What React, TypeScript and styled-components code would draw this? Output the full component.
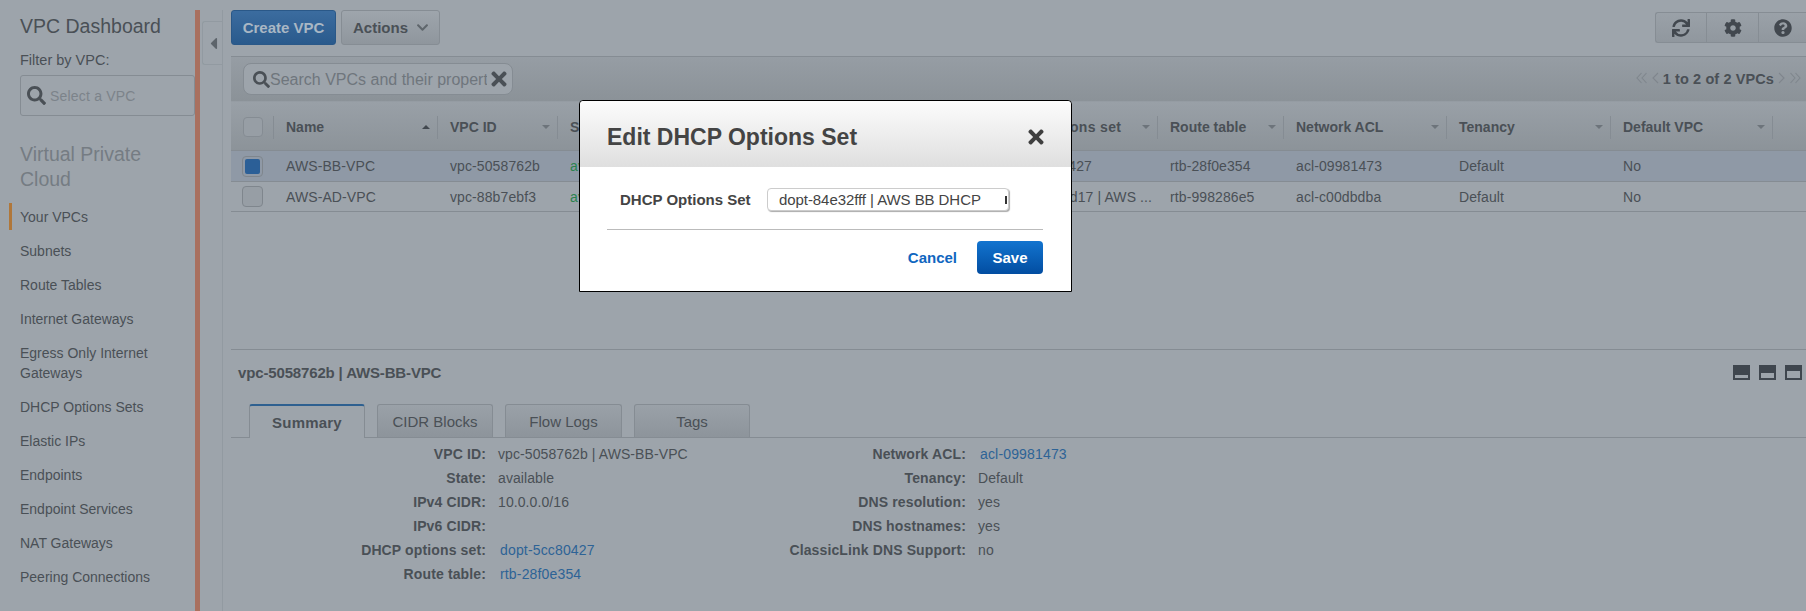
import React from "react";
import styled, { createGlobalStyle } from "styled-components";
import { FaCaretLeft, FaChevronDown, FaCog, FaQuestionCircle, FaSearch, FaSync, FaTimes } from "react-icons/fa";

const COLUMNS = "43px 164px 120px 142px 150px 136px 172px 126px 163px 164px 162px 1fr";

const GlobalStyle = createGlobalStyle`
  html, body {
    margin: 0;
    padding: 0;
    background: #9da4ab;
  }
  body {
    font-family: "Liberation Sans", Arial, sans-serif;
    font-size: 14px;
    color: #4a5056;
  }
  * {
    box-sizing: border-box;
  }
`;

const Page = styled.div`
  position: relative;
  display: flex;
  width: 1806px;
  height: 611px;
  overflow: hidden;
  background: #9da4ab;
`;

const Sidebar = styled.aside`
  width: 195px;
  flex: none;
  padding-top: 14px;
`;

const SidebarTitle = styled.div`
  margin-left: 20px;
  font-size: 19.5px;
  line-height: 25px;
`;

const FilterLabel = styled.div`
  margin: 11px 0 0 20px;
  font-size: 14.5px;
  line-height: 20px;
`;

const FilterBox = styled.div`
  display: flex;
  align-items: center;
  gap: 4px;
  width: 175px;
  height: 41px;
  margin: 5px 0 0 20px;
  padding-left: 6px;
  border: 1px solid #858c93;
  border-radius: 3px;
  color: #7c838a;
  letter-spacing: 0.2px;
  svg {
    color: #4a5056;
    font-size: 19px;
  }
`;

const SectionTitle = styled.div`
  margin: 26px 0 0 20px;
  width: 150px;
  font-size: 19.5px;
  line-height: 25px;
  color: #757c83;
`;

const NavList = styled.nav`
  margin: 11px 0 0 9px;
`;

const NavItem = styled.div<{ $active?: boolean }>`
  margin-bottom: 7px;
  padding: 3.5px 0 3.5px 8px;
  border-left: 3px solid ${(p) => (p.$active ? "#b0773a" : "transparent")};
  line-height: 20px;
`;

const TallNavItem = styled(NavItem)`
  width: 175px;
`;

const ResizeBar = styled.div`
  width: 5px;
  flex: none;
  margin-top: 10px;
  background: #a9705f;
`;

const Gutter = styled.div`
  width: 23px;
  flex: none;
  margin: 10px 8px 0 0;
  padding-top: 11px;
  border-right: 1px solid #929aa1;
`;

const CollapseHandle = styled.div`
  display: flex;
  align-items: center;
  width: 20px;
  height: 44px;
  margin-left: 2px;
  padding-left: 2px;
  border: 1px solid #929aa1;
  border-right: none;
  border-radius: 3px 0 0 3px;
  color: #5d646b;
  font-size: 19px;
`;

const Main = styled.main`
  flex: 1;
  min-width: 0;
  display: flex;
  flex-direction: column;
`;

const Toolbar = styled.div`
  display: flex;
  justify-content: space-between;
  height: 57px;
  padding-top: 10px;
  border-bottom: 1px solid #858c93;
`;

const ToolbarGroup = styled.div`
  display: flex;
  gap: 5px;
`;

const PrimaryButton = styled.div`
  display: flex;
  align-items: center;
  justify-content: center;
  width: 105px;
  height: 35px;
  border: 1px solid #2a5888;
  border-radius: 3px;
  background: linear-gradient(#3b6c9f, #2a5a8c);
  color: #a9b7c4;
  font-weight: bold;
  font-size: 15px;
`;

const ActionsButton = styled.div`
  display: flex;
  align-items: center;
  gap: 8px;
  width: 99px;
  height: 35px;
  padding-left: 11px;
  border: 1px solid #868d94;
  border-radius: 3px;
  background: linear-gradient(#9ea5ac, #8f969d);
  font-weight: bold;
  font-size: 15px;
  svg {
    font-size: 13px;
    color: #5f666c;
  }
`;

const IconGroup = styled.div`
  display: flex;
  height: 31px;
  margin-top: 2px;
  border: 1px solid #868d94;
  border-right: none;
  border-radius: 3px 0 0 3px;
  background: linear-gradient(#9aa1a8, #90979e);
`;

const IconButton = styled.div<{ $width: number }>`
  display: flex;
  align-items: center;
  justify-content: center;
  width: ${(p) => p.$width}px;
  border-right: 1px solid #868d94;
  font-size: 18px;
  color: #42484f;
  &:last-child {
    border-right: none;
  }
`;

const FilterStrip = styled.div`
  display: flex;
  align-items: center;
  justify-content: space-between;
  height: 45px;
  padding: 0 5px 0 12px;
  border-bottom: 1px solid #959ca3;
  background: linear-gradient(#969da4, #8b9298);
`;

const SearchBox = styled.div`
  display: flex;
  align-items: center;
  width: 270px;
  height: 32px;
  padding: 0 2px 0 9px;
  border: 1px solid #858c93;
  border-radius: 8px;
  background: #9da4ab;
  svg {
    flex: none;
    color: #4a5056;
  }
`;

const SearchInput = styled.input`
  flex: 1;
  min-width: 0;
  height: 100%;
  margin-right: 1px;
  padding: 1px 0 0;
  border: none;
  outline: none;
  background: transparent;
  font-family: inherit;
  font-size: 16px;
  &::placeholder {
    color: #6f767d;
    opacity: 1;
  }
`;

const Pager = styled.div`
  display: flex;
  align-items: center;
`;

const PagerArrow = styled.svg`
  display: block;
  height: 12px;
  margin-top: -3px;
  fill: none;
  stroke: #7f868d;
  stroke-width: 1.1;
`;

const PagerDouble = styled(PagerArrow)`
  width: 12px;
`;

const PagerSingle = styled(PagerArrow)`
  width: 7px;
  margin-left: 4px;
  margin-right: 4px;
`;

const PagerText = styled.span`
  color: #4a5056;
  font-weight: bold;
  font-size: 14.5px;
  letter-spacing: 0.1px;
  white-space: nowrap;
`;

const HeaderRow = styled.div`
  display: grid;
  grid-template-columns: ${COLUMNS};
  align-items: center;
  height: 49px;
  padding-top: 2px;
  border-bottom: 1px solid #858c93;
  background: linear-gradient(#99a0a7, #8c9399);
`;

const HeaderCell = styled.div<{ $tracking: number }>`
  display: flex;
  align-items: center;
  justify-content: space-between;
  height: 23px;
  padding: 0 7px 0 12px;
  border-right: 1px solid #858c93;
  font-weight: bold;
  letter-spacing: ${(p) => p.$tracking}px;
  white-space: nowrap;
`;

const CheckCell = styled.div`
  height: 23px;
  padding: 1px 0 0 12px;
  border-right: 1px solid #858c93;
`;

const SortCaret = styled.span<{ $up?: boolean }>`
  width: 0;
  height: 0;
  border-left: 4px solid transparent;
  border-right: 4px solid transparent;
  border-top: ${(p) => (p.$up ? "none" : "4px solid #6d747b")};
  border-bottom: ${(p) => (p.$up ? "4px solid #42484f" : "none")};
`;

const Row = styled.div<{ $selected?: boolean; $height: number }>`
  display: grid;
  grid-template-columns: ${COLUMNS};
  align-items: center;
  height: ${(p) => p.$height}px;
  border-bottom: 1px solid #858c93;
  background: ${(p) => (p.$selected ? "#8f99a6" : "#9da4ab")};
`;

const Cell = styled.div<{ $green?: boolean }>`
  padding: 0 3px 0 12px;
  overflow: hidden;
  white-space: nowrap;
  letter-spacing: 0.1px;
  color: ${(p) => (p.$green ? "#2c8350" : "#4a5056")};
`;

const RowCheck = styled.div<{ $checked?: boolean }>`
  display: flex;
  align-items: center;
  justify-content: center;
  width: 21px;
  height: 21px;
  margin-left: 11px;
  border: 1px solid #7f868d;
  border-radius: 4px;
  background: ${(p) => (p.$checked ? "transparent" : "#979ea5")};
`;

const HeaderCheck = styled.div`
  width: 20px;
  height: 20px;
  border: 1px solid #858c93;
  border-radius: 4px;
  background: #979ea5;
`;

const CheckFill = styled.div`
  width: 15px;
  height: 15px;
  border-radius: 2px;
  background: #2b5f97;
`;

const Spacer = styled.div`
  flex: 1;
  border-bottom: 1px solid #858c93;
`;

const Detail = styled.section`
  height: 261px;
`;

const DetailHead = styled.div`
  display: flex;
  align-items: center;
  justify-content: space-between;
  height: 45px;
  padding: 0 4px 0 7px;
  font-size: 15px;
  font-weight: bold;
  letter-spacing: -0.15px;
`;

const PaneIcons = styled.div`
  display: flex;
  gap: 9px;
`;

const PaneIcon = styled.svg`
  display: block;
  width: 17px;
  height: 15px;
`;

const Tabs = styled.div`
  display: flex;
  gap: 12px;
  height: 34px;
  margin-top: 9px;
  padding-left: 18px;
  border-bottom: 1px solid #858c93;
`;

const Tab = styled.div<{ $active?: boolean; $width?: number }>`
  display: flex;
  align-items: center;
  justify-content: center;
  width: ${(p) => p.$width ?? 116}px;
  height: ${(p) => (p.$active ? "34px" : "33px")};
  border: 1px solid #858c93;
  border-top: ${(p) => (p.$active ? "2px solid #2e6090" : "1px solid #858c93")};
  border-bottom: none;
  border-radius: 3px 3px 0 0;
  background: ${(p) => (p.$active ? "#9da4ab" : "linear-gradient(#9aa1a8, #8d949b)")};
  font-size: 15px;
  font-weight: ${(p) => (p.$active ? "bold" : "normal")};
  letter-spacing: ${(p) => (p.$active ? "0.2px" : "0")};
`;

const DetailBody = styled.div`
  display: flex;
  padding-top: 4px;
`;

const DetailColumn = styled.div`
  width: 480px;
`;

const DetailRow = styled.div`
  display: grid;
  grid-template-columns: 255px 1fr;
  column-gap: 12px;
  height: 24px;
  align-items: center;
  letter-spacing: 0.09px;
`;

const DetailLabel = styled.div`
  font-weight: bold;
  text-align: right;
  white-space: nowrap;
  letter-spacing: 0.13px;
`;

const DetailLink = styled.a`
  padding-left: 2px;
  color: #2d6396;
  letter-spacing: 0.16px;
`;

const Modal = styled.div`
  position: absolute;
  left: 579px;
  top: 100px;
  width: 493px;
  height: 192px;
  border: 1px solid #000;
  border-radius: 4px 4px 0 0;
  background: #fff;
  color: #444;
`;

const ModalHeader = styled.div`
  display: flex;
  align-items: center;
  justify-content: space-between;
  height: 66px;
  padding: 6px 24px 0 27px;
  border-radius: 4px 4px 0 0;
  background: linear-gradient(#fcfcfc, #dfdfdf);
`;

const ModalTitle = styled.div`
  font-size: 23px;
  font-weight: bold;
`;

const CloseIcon = styled.div`
  display: flex;
  font-size: 22px;
  color: #3f3f3f;
`;

const ModalBody = styled.div`
  margin: 0 28px 0 27px;
`;

const FieldRow = styled.div`
  display: flex;
  align-items: center;
  height: 63px;
  padding: 3px 0 0 13px;
  border-bottom: 1px solid #bbb;
`;

const FieldLabel = styled.label`
  width: 147px;
  font-size: 15px;
  font-weight: bold;
`;

const SelectWrap = styled.div`
  position: relative;
  margin-top: -1px;
  &::after {
    content: "";
    position: absolute;
    top: 8px;
    right: 2px;
    width: 2px;
    height: 8px;
    background: #333;
  }
`;

const Select = styled.select`
  display: block;
  width: 242px;
  height: 23px;
  padding: 0 0 0 11px;
  border: 1px solid #ccc;
  border-radius: 4px;
  background: #fff;
  box-shadow: 1px 1px 1px #aaa;
  appearance: none;
  outline: none;
  font-family: inherit;
  font-size: 15px;
  letter-spacing: -0.07px;
  color: #444;
`;

const ModalActions = styled.div`
  display: flex;
  align-items: center;
  justify-content: flex-end;
  gap: 20px;
  height: 57px;
  padding-bottom: 2px;
`;

const CancelLink = styled.a`
  font-size: 15px;
  font-weight: bold;
  color: #0f66c0;
`;

const SaveButton = styled.div`
  display: flex;
  align-items: center;
  justify-content: center;
  width: 66px;
  height: 33px;
  border-radius: 4px;
  background: linear-gradient(#1274cf, #024da1);
  color: #fff;
  font-size: 15px;
  font-weight: bold;
`;

const navItems = ["Subnets", "Route Tables", "Internet Gateways"];

const navItemsAfter = [
  "DHCP Options Sets",
  "Elastic IPs",
  "Endpoints",
  "Endpoint Services",
  "NAT Gateways",
  "Peering Connections",
];

const headers = ["Name", "VPC ID", "State", "IPv4 CIDR", "IPv6 CIDR", "DHCP options set", "Route table", "Network ACL", "Tenancy", "Default VPC"];

const rows = [
  ["AWS-BB-VPC", "vpc-5058762b", "available", "10.0.0.0/16", "", "dopt-5cc80427", "rtb-28f0e354", "acl-09981473", "Default", "No"],
  ["AWS-AD-VPC", "vpc-88b7ebf3", "available", "172.31.0.0/16", "", "dopt-84e32d17 | AWS ...", "rtb-998286e5", "acl-c00dbdba", "Default", "No"],
];

const summaryLeft: [string, string, boolean?][] = [
  ["VPC ID:", "vpc-5058762b | AWS-BB-VPC"],
  ["State:", "available"],
  ["IPv4 CIDR:", "10.0.0.0/16"],
  ["IPv6 CIDR:", ""],
  ["DHCP options set:", "dopt-5cc80427", true],
  ["Route table:", "rtb-28f0e354", true],
];

const summaryRight: [string, string, boolean?][] = [
  ["Network ACL:", "acl-09981473", true],
  ["Tenancy:", "Default"],
  ["DNS resolution:", "yes"],
  ["DNS hostnames:", "yes"],
  ["ClassicLink DNS Support:", "no"],
];

const Pane = ({ top }: { top: number }) => (
  <PaneIcon viewBox="0 0 17 15">
    <rect width="17" height="15" fill="#3f464e" />
    <rect x="2" y={top} width="13" height={13 - top} fill="#9da4ab" />
  </PaneIcon>
);

const SummaryColumn = ({ items }: { items: [string, string, boolean?][] }) => (
  <DetailColumn>
    {items.map(([label, value, link]) => (
      <DetailRow key={label}>
        <DetailLabel>{label}</DetailLabel>
        {link ? <DetailLink>{value}</DetailLink> : <div>{value}</div>}
      </DetailRow>
    ))}
  </DetailColumn>
);

export default function App() {
  return (
    <Page>
      <GlobalStyle />
      <Sidebar>
        <SidebarTitle>VPC Dashboard</SidebarTitle>
        <FilterLabel>Filter by VPC:</FilterLabel>
        <FilterBox>
          <FaSearch />
          Select a VPC
        </FilterBox>
        <SectionTitle>Virtual Private Cloud</SectionTitle>
        <NavList>
          <NavItem $active>Your VPCs</NavItem>
          {navItems.map((item) => (
            <NavItem key={item}>{item}</NavItem>
          ))}
          <TallNavItem>Egress Only Internet Gateways</TallNavItem>
          {navItemsAfter.map((item) => (
            <NavItem key={item}>{item}</NavItem>
          ))}
        </NavList>
      </Sidebar>
      <ResizeBar />
      <Gutter>
        <CollapseHandle>
          <FaCaretLeft />
        </CollapseHandle>
      </Gutter>
      <Main>
        <Toolbar>
          <ToolbarGroup>
            <PrimaryButton>Create VPC</PrimaryButton>
            <ActionsButton>
              Actions
              <FaChevronDown />
            </ActionsButton>
          </ToolbarGroup>
          <IconGroup>
            <IconButton $width={51}>
              <FaSync />
            </IconButton>
            <IconButton $width={52}>
              <FaCog />
            </IconButton>
            <IconButton $width={47}>
              <FaQuestionCircle />
            </IconButton>
          </IconGroup>
        </Toolbar>
        <FilterStrip>
          <SearchBox>
            <FaSearch size={17} />
            <SearchInput placeholder="Search VPCs and their properties" readOnly />
            <FaTimes size={22} />
          </SearchBox>
          <Pager>
            <PagerDouble viewBox="0 0 12 12">
              <path d="M5.5 1 1 6l4.5 5M10.5 1 6 6l4.5 5" />
            </PagerDouble>
            <PagerSingle viewBox="0 0 7 12">
              <path d="M6 1 1 6l5 5" />
            </PagerSingle>
            <PagerText>1 to 2 of 2 VPCs</PagerText>
            <PagerSingle viewBox="0 0 7 12">
              <path d="m1 1 5 5-5 5" />
            </PagerSingle>
            <PagerDouble viewBox="0 0 12 12">
              <path d="m1.5 1 4.5 5-4.5 5M6.5 1l4.5 5-4.5 5" />
            </PagerDouble>
          </Pager>
        </FilterStrip>
        <HeaderRow>
          <CheckCell>
            <HeaderCheck />
          </CheckCell>
          {headers.map((title, i) => (
            <HeaderCell key={title} $tracking={title === "DHCP options set" ? 0.33 : 0}>
              {title}
              <SortCaret $up={i === 0} />
            </HeaderCell>
          ))}
        </HeaderRow>
        {rows.map((row, i) => (
          <Row key={row[0]} $selected={i === 0} $height={i === 0 ? 31 : 30}>
            <RowCheck $checked={i === 0}>{i === 0 && <CheckFill />}</RowCheck>
            {row.map((value, j) => (
              <Cell key={j} $green={j === 2}>
                {value}
              </Cell>
            ))}
          </Row>
        ))}
        <Spacer />
        <Detail>
          <DetailHead>
            vpc-5058762b | AWS-BB-VPC
            <PaneIcons>
              <Pane top={10} />
              <Pane top={8} />
              <Pane top={6} />
            </PaneIcons>
          </DetailHead>
          <Tabs>
            <Tab $active>Summary</Tab>
            <Tab>CIDR Blocks</Tab>
            <Tab $width={117}>Flow Logs</Tab>
            <Tab>Tags</Tab>
          </Tabs>
          <DetailBody>
            <SummaryColumn items={summaryLeft} />
            <SummaryColumn items={summaryRight} />
          </DetailBody>
        </Detail>
      </Main>
      <Modal>
        <ModalHeader>
          <ModalTitle>Edit DHCP Options Set</ModalTitle>
          <CloseIcon>
            <FaTimes />
          </CloseIcon>
        </ModalHeader>
        <ModalBody>
          <FieldRow>
            <FieldLabel>DHCP Options Set</FieldLabel>
            <SelectWrap>
              <Select defaultValue="dopt-84e32fff">
                <option value="dopt-84e32fff">dopt-84e32fff | AWS BB DHCP</option>
              </Select>
            </SelectWrap>
          </FieldRow>
          <ModalActions>
            <CancelLink>Cancel</CancelLink>
            <SaveButton>Save</SaveButton>
          </ModalActions>
        </ModalBody>
      </Modal>
    </Page>
  );
}
